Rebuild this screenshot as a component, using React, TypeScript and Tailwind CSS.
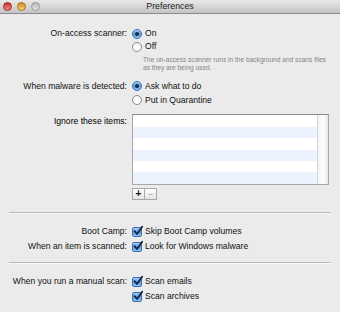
import React from "react";

const Radio = ({ on }: { on?: boolean }) =>
  on ? (
    <span className="w-[10px] h-[10px] rounded-full border border-[#3a6fb5] bg-gradient-to-b from-[#a9cdf4] via-[#5a9be3] to-[#8ec3f5] flex items-center justify-center shrink-0">
      <span className="w-[4px] h-[4px] rounded-full bg-[#1c2a40]" />
    </span>
  ) : (
    <span className="w-[10px] h-[10px] rounded-full border border-[#8a8a8a] bg-gradient-to-b from-[#f4f4f4] to-white shrink-0" />
  );

const Check = () => (
  <span className="relative w-[10px] h-[10px] rounded-[2px] border border-[#3a6fb5] bg-gradient-to-b from-[#a9cdf4] via-[#5a9be3] to-[#8ec3f5] shrink-0">
    <svg viewBox="0 0 10 10" className="absolute left-[0px] top-[-2px] w-[10px] h-[10px] overflow-visible">
      <path d="M1.6 5.2 L4 8 L9.2 0.8" fill="none" stroke="#14233a" strokeWidth="1.8" strokeLinecap="round" strokeLinejoin="round" />
    </svg>
  </span>
);

const Row = ({
  label,
  children,
  h = "h-[13px]",
}: {
  label?: string;
  children: React.ReactNode;
  h?: string;
}) => (
  <div className={`flex items-center ${h}`}>
    <div className="w-[127px] text-right whitespace-nowrap text-[#111]">{label}</div>
    <div className="ml-[5px] flex items-center gap-[3px] whitespace-nowrap text-[#111]">{children}</div>
  </div>
);

export default function App() {
  return (
    <div
      className="w-[340px] h-[312px] bg-[#ebebeb] overflow-hidden text-[8.6px] leading-[13px]"
      style={{ fontFamily: '"Liberation Sans", Arial, sans-serif' }}
    >
      {/* title bar */}
      <div className="relative h-[14px] bg-gradient-to-b from-[#e9e9e9] to-[#c4c4c4] border-b border-[#8a8a8a] flex items-center justify-center">
        <div className="absolute left-[3px] top-[2px] flex gap-[5px]">
          <span className="w-[9px] h-[9px] rounded-full bg-gradient-to-b from-[#c4302b] to-[#f58a86] border border-[#9a2a26]" />
          <span className="w-[9px] h-[9px] rounded-full bg-gradient-to-b from-[#d08a1e] to-[#fbd27a] border border-[#a8701a]" />
          <span className="w-[9px] h-[9px] rounded-full bg-gradient-to-b from-[#b8b8b8] to-[#e4e4e4] border border-[#9a9a9a]" />
        </div>
        <span className="text-[8.8px] text-[#222]">Preferences</span>
      </div>

      <div className="flex flex-col">
        <div className="mt-[13px]">
          <Row label="On-access scanner:">
            <Radio on />
            <span>On</span>
          </Row>
          <Row label="">
            <Radio />
            <span>Off</span>
          </Row>
          <div className="ml-[143px] mt-[3px] text-[6.6px] leading-[8px] text-[#858585] whitespace-nowrap">
            <div>The on-access scanner runs in the background and scans files</div>
            <div>as they are being used.</div>
          </div>
        </div>

        <div className="mt-[7px]">
          <Row label="When malware is detected:" h="h-[14px]">
            <Radio on />
            <span>Ask what to do</span>
          </Row>
          <Row label="" h="h-[14px]">
            <Radio />
            <span>Put in Quarantine</span>
          </Row>
        </div>

        <div className="mt-[7px] flex">
          <div className="w-[127px] text-right whitespace-nowrap pt-[1px]">Ignore these items:</div>
          <div className="ml-[5px] flex flex-col">
            <div className="w-[197px] h-[71px] border border-[#a8a8a8] border-t-[#8c8c8c] bg-white flex">
              <div className="flex-1 flex flex-col">
                <div className="h-[12px] bg-white" />
                <div className="h-[12px] bg-[#edf3fe]" />
                <div className="h-[12px] bg-white" />
                <div className="h-[11px] bg-[#edf3fe]" />
                <div className="h-[12px] bg-white" />
                <div className="h-[12px] bg-[#edf3fe]" />
              </div>
              <div className="w-[11px] border-l border-[#d8d8d8] bg-gradient-to-r from-[#f2f2f2] via-white to-[#e8e8e8]" />
            </div>
            <div className="mt-[3px] flex">
              <div className="w-[13px] h-[12px] border border-[#a8a8a8] bg-gradient-to-b from-white to-[#e4e4e4] flex items-center justify-center text-[10px] font-bold text-[#111] leading-none">
                +
              </div>
              <div className="w-[12px] h-[12px] border border-l-0 border-[#a8a8a8] bg-gradient-to-b from-white to-[#e4e4e4] flex items-center justify-center text-[9px] text-[#999] leading-none">
                −
              </div>
            </div>
          </div>
        </div>

        <div className="mt-[12px] mx-[9px] h-[2px] border-t border-[#b9b9b9] border-b border-b-[#f8f8f8]" />

        <div className="mt-[10px]">
          <Row label="Boot Camp:" h="h-[15px]">
            <Check />
            <span>Skip Boot Camp volumes</span>
          </Row>
          <Row label="When an item is scanned:" h="h-[15px]">
            <Check />
            <span>Look for Windows malware</span>
          </Row>
        </div>

        <div className="mt-[8px] mx-[9px] h-[2px] border-t border-[#b9b9b9] border-b border-b-[#f8f8f8]" />

        <div className="mt-[10px]">
          <Row label="When you run a manual scan:" h="h-[15px]">
            <Check />
            <span>Scan emails</span>
          </Row>
          <Row label="" h="h-[15px]">
            <Check />
            <span>Scan archives</span>
          </Row>
        </div>
      </div>
    </div>
  );
}
